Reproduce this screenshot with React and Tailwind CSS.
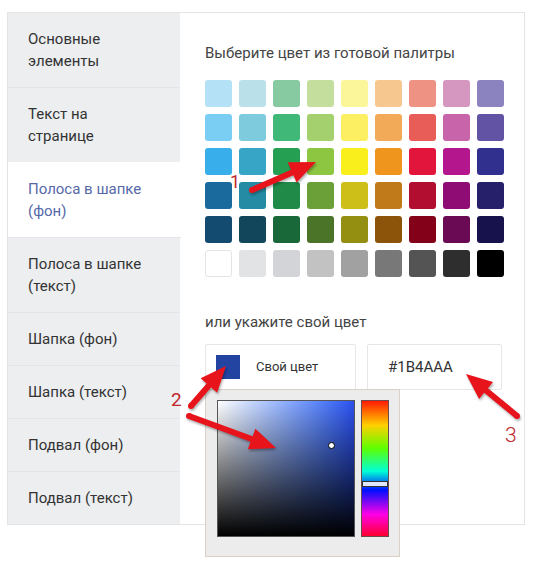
import React from 'react';

const menu = [
  { label: ['Основные', 'элементы'] },
  { label: ['Текст на', 'странице'] },
  { label: ['Полоса в шапке', '(фон)'], active: true },
  { label: ['Полоса в шапке', '(текст)'] },
  { label: ['Шапка (фон)'] },
  { label: ['Шапка (текст)'] },
  { label: ['Подвал (фон)'] },
  { label: ['Подвал (текст)'], last: true },
];

const palette = [
  ['#b5e1f6', '#bae1ea', '#87c9a1', '#c4df9d', '#fcf69b', '#f6c78f', '#ee9284', '#d597c0', '#8b83c0'],
  ['#7acdf3', '#7dcbdc', '#40b878', '#a5d06e', '#fcef61', '#f2aa58', '#e95d58', '#c864a9', '#6353a4'],
  ['#38aeea', '#37a5c5', '#25a053', '#8dc641', '#f9ef1d', '#ef941d', '#e2153d', '#b4178d', '#31308e'],
  ['#1b6a9d', '#258ba5', '#208a49', '#6b9f37', '#cdbf18', '#c07a1a', '#b20e30', '#8f0c74', '#252069'],
  ['#134b70', '#12475b', '#19683a', '#4c7429', '#948e11', '#8c530a', '#84011a', '#6a0954', '#17124b'],
  ['#ffffff', '#e2e3e5', '#d2d4d8', '#c2c2c2', '#a1a1a1', '#787878', '#545454', '#2e2e2e', '#000000'],
];

// polygon for a thick annotation arrow from tail to tip
const arrowPoints = (x1, y1, x2, y2, w = 6, hl = 26, hw = 11) => {
  const dx = x2 - x1;
  const dy = y2 - y1;
  const len = Math.hypot(dx, dy);
  const ux = dx / len;
  const uy = dy / len;
  const px = -uy;
  const py = ux;
  const bx = x2 - ux * hl;
  const by = y2 - uy * hl;
  const pts = [
    [x1 + (px * w) / 2, y1 + (py * w) / 2],
    [bx + (px * w) / 2, by + (py * w) / 2],
    [bx + px * hw, by + py * hw],
    [x2, y2],
    [bx - px * hw, by - py * hw],
    [bx - (px * w) / 2, by - (py * w) / 2],
    [x1 - (px * w) / 2, y1 - (py * w) / 2],
  ];
  return pts.map((p) => p.join(',')).join(' ');
};

const arrows = [
  [252, 190, 316, 162],
  [191, 406, 226, 366],
  [189, 416, 276, 448],
  [517, 416, 466, 374],
];

const Annotations = () => (
  <svg
    className="absolute left-0 top-0 z-20 pointer-events-none drop-shadow-[1px_2px_1px_rgba(0,0,0,0.3)]"
    width="535"
    height="566"
    viewBox="0 0 535 566"
  >
    {arrows.map(([x1, y1, x2, y2], i) => (
      <g key={i} fill="#e8141c">
        <circle cx={x1} cy={y1} r="3" />
        <polygon points={arrowPoints(x1, y1, x2, y2)} />
      </g>
    ))}
  </svg>
);

const ColorPicker = () => (
  <div className="absolute left-[-1px] top-full z-10 flex gap-[6px] w-[195px] h-[168px] pl-[11px] pt-[10px] bg-[#ececec] border border-[#d9d1c6]">
    <div className="relative w-[138px] h-[137px] border border-[#555] bg-linear-to-r from-white to-[#2c4ff0]">
      <div className="absolute inset-0 bg-linear-to-t from-black to-transparent" />
      <div className="absolute left-[110px] top-[41px] w-[7px] h-[7px] rounded-full bg-white border-[1.5px] border-black" />
    </div>
    <div className="relative w-[28px] h-[137px] border border-[#6b4b4b] bg-[linear-gradient(to_bottom,#ff1a00,#ffd000_18%,#5eff00_35%,#00ffd5_52%,#0010ff_66%,#ff00e6_84%,#ff0030)]">
      <div className="absolute left-0 right-0 top-[80px] h-[6px] bg-[#dfe8ff] border border-[#333]" />
    </div>
  </div>
);

const App = () => {
  return (
    <div className="relative w-[535px] h-[566px] bg-white pl-[7px] pt-[12px] font-['Roboto',sans-serif]">
      <div className="flex w-[518px] border border-[#e4e4e4] bg-white">
        <div className="w-[172px] shrink-0">
          {menu.map((item, i) => (
            <div
              key={i}
              className={`pl-5 py-[15px] text-[15px] leading-[22px] ${
                item.active ? 'bg-white text-[#5668a8] w-[173px]' : 'bg-[#eceef0] text-[#333]'
              } ${item.last ? '' : 'border-b border-[#e3e5e8]'} ${
                menu[i + 1] && menu[i + 1].active ? 'border-b-white' : ''
              }`}
            >
              {item.label.map((line, j) => (
                <div key={j}>{line}</div>
              ))}
            </div>
          ))}
        </div>

        <div className="flex-1 pl-[25px] pt-[29px]">
          <div className="text-[15px] leading-[22px] text-[#444]">
            Выберите цвет из готовой палитры
          </div>
          <div className="mt-[16px] grid grid-cols-[repeat(9,27px)] gap-[7px]">
            {palette.flat().map((c, i) => (
              <div
                key={i}
                className={`w-[27px] h-[27px] rounded-[3px] ${c === '#ffffff' ? 'border border-[#e4e4e4]' : ''}`}
                style={{ backgroundColor: c }}
              />
            ))}
          </div>

          <div className="mt-[34px] text-[15px] leading-[22px] text-[#444]">
            или укажите свой цвет
          </div>
          <div className="mt-[11px] flex gap-[11px]">
            <div className="relative flex items-center w-[151px] h-[46px] pl-[10px] border border-[#e6e6e6] rounded-[2px]">
              <div className="w-[24px] h-[24px] bg-[#2444a2]" />
              <span className="ml-[16px] text-[13px] text-[#333]">Свой цвет</span>
              <ColorPicker />
            </div>
            <div className="flex items-center w-[135px] h-[46px] pl-[20px] border border-[#e6e6e6] rounded-[2px] text-[15px] text-[#333]">
              #1B4AAA
            </div>
          </div>
        </div>
      </div>

      <Annotations />

      <span className="absolute left-[230px] top-[173px] text-[18px] leading-none text-[#c0272d]">1</span>
      <span className="absolute left-[171px] top-[390px] text-[19px] leading-none text-[#c0272d]">2</span>
      <span className="absolute left-[505px] top-[425px] text-[21px] leading-none font-light text-[#c0272d]">3</span>
    </div>
  );
};

export default App;
